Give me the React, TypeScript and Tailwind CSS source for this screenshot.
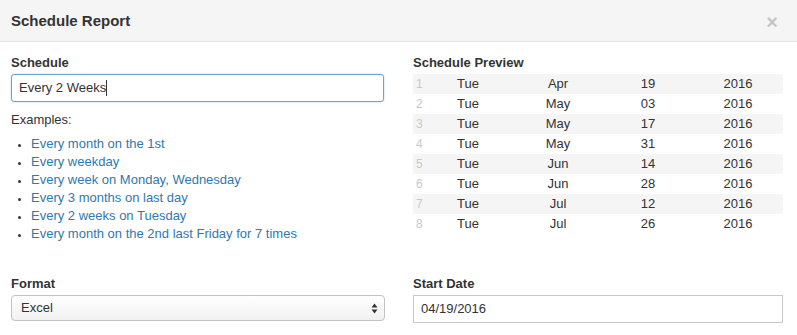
import React from 'react';

const examples = [
  'Every month on the 1st',
  'Every weekday',
  'Every week on Monday, Wednesday',
  'Every 3 months on last day',
  'Every 2 weeks on Tuesday',
  'Every month on the 2nd last Friday for 7 times',
];

const preview = [
  ['Tue', 'Apr', '19', '2016'],
  ['Tue', 'May', '03', '2016'],
  ['Tue', 'May', '17', '2016'],
  ['Tue', 'May', '31', '2016'],
  ['Tue', 'Jun', '14', '2016'],
  ['Tue', 'Jun', '28', '2016'],
  ['Tue', 'Jul', '12', '2016'],
  ['Tue', 'Jul', '26', '2016'],
];

export default function App() {
  return (
    <div className="w-[797px] h-[335px] overflow-hidden bg-white text-[13px] text-[#333] font-['Liberation_Sans',Arial,sans-serif]">
      {/* header */}
      <div className="h-[42px] flex items-center justify-between pl-[11px] pr-[19px] bg-[#f5f5f5] border-b border-[#e3e3e3]">
        <h4 className="text-[15px] font-bold text-[#333] leading-none -mt-[1px]">Schedule Report</h4>
        <span className="text-[20px] font-bold text-black opacity-20 leading-none mt-[2px]">×</span>
      </div>

      {/* body */}
      <div className="grid grid-cols-[373px_370px] gap-x-[29px] px-[11px] pt-[12px]">
        <div>
          <label className="block font-bold leading-[18px] mb-[2px]">Schedule</label>
          <div className="h-[28px] flex items-center px-[7px] border border-[#66a3d6] rounded-[3px] shadow-[0_0_2px_rgba(102,163,214,0.5)]">
            <span>Every 2 Weeks</span>
            <span className="w-px h-[16px] bg-[#333]" />
          </div>
          <p className="mt-[9px] leading-[18px]">Examples:</p>
          <ul className="mt-[6px] pl-[20px] list-disc marker:text-[#333] marker:text-[11px]">
            {examples.map(ex => (
              <li key={ex} className="leading-[18px] text-[#2f78b0]">{ex}</li>
            ))}
          </ul>
        </div>

        <div>
          <label className="block font-bold leading-[18px] mb-[2px]">Schedule Preview</label>
          <div>
            {preview.map((row, i) => (
              <div key={i} className={`grid grid-cols-[10px_1fr_1fr_1fr_1fr] h-[20px] items-center ${i % 2 === 0 ? 'bg-[#f5f5f5]' : 'bg-white'}`}>
                <span className="pl-[3px] text-[#c8c8c8] text-[12px]">{i + 1}</span>
                {row.map((cell, j) => (
                  <span key={j} className="text-center">{cell}</span>
                ))}
              </div>
            ))}
          </div>
        </div>

        <div className="mt-[32px]">
          <label className="block font-bold leading-[18px] mb-[2px]">Format</label>
          <div className="h-[26px] w-[374px] flex items-center justify-between px-[9px] border border-[#c2c2c2] rounded-[4px] bg-gradient-to-b from-white to-[#f1f1f1]">
            <span>Excel</span>
            <svg width="7" height="11" viewBox="0 0 7 11" className="mr-[-3px]">
              <path d="M3.5 0.5 L6.5 4.5 H0.5 Z" fill="#333" />
              <path d="M3.5 10.5 L6.5 6.5 H0.5 Z" fill="#333" />
            </svg>
          </div>
        </div>

        <div className="mt-[32px]">
          <label className="block font-bold leading-[18px] mb-[2px]">Start Date</label>
          <div className="h-[28px] flex items-center px-[7px] border border-[#c8c8c8]">
            <span>04/19/2016</span>
          </div>
        </div>
      </div>
    </div>
  );
}
